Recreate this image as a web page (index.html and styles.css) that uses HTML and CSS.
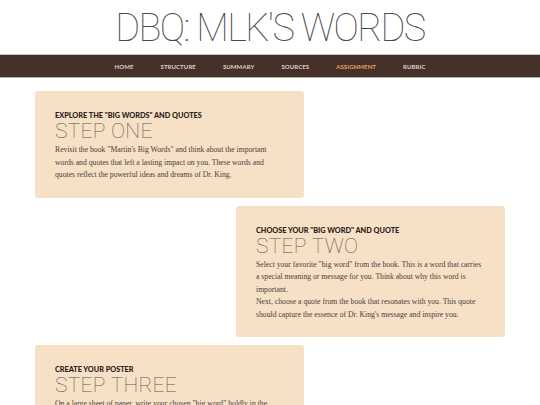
FILE: index.html
```html
<!DOCTYPE html>
<html>
<head>
<meta charset="utf-8">
<link rel="stylesheet" href="styles.css">
</head>
<body>
<header class="site-header">
  <h1 class="site-title">DBQ: MLK'S WORDS</h1>
</header>
<nav class="nav">
  <a class="nav-link">HOME</a>
  <a class="nav-link">STRUCTURE</a>
  <a class="nav-link">SUMMARY</a>
  <a class="nav-link">SOURCES</a>
  <a class="nav-link active">ASSIGNMENT</a>
  <a class="nav-link">RUBRIC</a>
</nav>
<main class="steps">
  <section class="card left">
    <h3 class="kicker">EXPLORE THE "BIG WORDS" AND QUOTES</h3>
    <h2 class="step">STEP ONE</h2>
    <p class="text">Revisit the book "Martin's Big Words" and think about the important words and quotes that left a lasting impact on you. These words and quotes reflect the powerful ideas and dreams of Dr. King.</p>
  </section>
  <section class="card right">
    <h3 class="kicker">CHOOSE YOUR "BIG WORD" AND QUOTE</h3>
    <h2 class="step">STEP TWO</h2>
    <p class="text">Select your favorite "big word" from the book. This is a word that carries a special meaning or message for you. Think about why this word is important.<br>Next, choose a quote from the book that resonates with you. This quote should capture the essence of Dr. King's message and inspire you.</p>
  </section>
  <section class="card left">
    <h3 class="kicker">CREATE YOUR POSTER</h3>
    <h2 class="step">STEP THREE</h2>
    <p class="text">On a large sheet of paper, write your chosen "big word" boldly in the center. Around it, add the quote you selected and decorate your poster.</p>
  </section>
</main>
</body>
</html>
```
FILE: styles.css
```css
html, body {
  margin: 0;
  padding: 0;
  background: #ffffff;
}
body {
  font-family: "Lato", "Liberation Sans", sans-serif;
  color: #333;
}
.site-header {
  height: 54px;
  display: flex;
  align-items: center;
  justify-content: center;
}
.site-title {
  margin: 0;
  font-family: "Roboto", sans-serif;
  font-weight: 100;
  font-size: 38px;
  letter-spacing: -1.6px;
  color: #4a4a4a;
  line-height: 1;
  padding-top: 1px;
}
.nav {
  height: 22px;
  background: #45302a;
  border-top: 1px solid #c9bcb5;
  border-bottom: 1px solid #b9aaa2;
  display: flex;
  justify-content: center;
  align-items: center;
}
.nav-link {
  font-family: "Lato", sans-serif;
  font-weight: 700;
  font-size: 6px;
  color: #ddd0cb;
  padding: 0 13.5px;
  letter-spacing: 0.1px;
}
.nav-link.active {
  color: #e9a45c;
}
.steps {
  padding: 13px 35px 0;
  display: flex;
  flex-direction: column;
  gap: 8px;
}
.card {
  width: 269px;
  box-sizing: border-box;
  background: #f6e0c6;
  border-radius: 3px;
  padding: 20px 23px 16px 20px;
}
.card.right {
  align-self: flex-end;
}
.kicker {
  margin: 0;
  font-family: "Lato", sans-serif;
  font-weight: 900;
  font-size: 7.3px;
  color: #2a201c;
  line-height: 9px;
}
.step {
  margin: 0;
  font-family: "Roboto", sans-serif;
  font-weight: 100;
  font-size: 21px;
  color: #5f554e;
  line-height: 22px;
  letter-spacing: 0.3px;
}
.text {
  margin: 2px 0 0;
  font-family: "Liberation Serif", serif;
  font-size: 7.7px;
  line-height: 12.5px;
  color: #4a3f39;
}
```
